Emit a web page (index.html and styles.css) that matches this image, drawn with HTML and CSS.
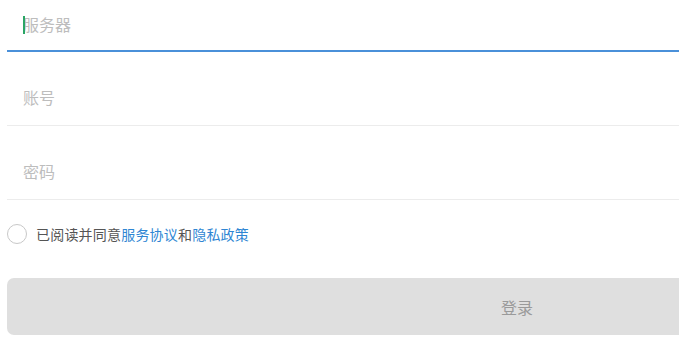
FILE: index.html
```html
<!DOCTYPE html>
<html lang="zh-CN">
<head>
<meta charset="UTF-8" />
<meta name="viewport" content="width=device-width, initial-scale=1" />
<title>登录</title>
<link rel="stylesheet" href="styles.css">
</head>
<body>

<div class="login">
  <div class="field field-server active">
    <span class="caret"></span>
    <input type="text" id="server" placeholder="服务器" />
  </div>
  <div class="field">
    <input type="text" id="account" placeholder="账号" />
  </div>
  <div class="field">
    <input type="password" id="password" placeholder="密码" />
  </div>

  <label class="agree">
    <span class="radio"></span>
    <span class="agree-text">已阅读并同意<a href="#">服务协议</a>和<a href="#">隐私政策</a></span>
  </label>

  <button class="login-btn" id="loginBtn">登录</button>
</div>

</body>
</html>
```

FILE: styles.css
```css
body {
  margin: 0;
  background: #fff;
  font-family: "Noto Sans CJK SC", "Noto Sans", sans-serif;
  overflow: hidden;
}
.login {
  width: 1020px;
  margin-left: 7px;
}
.field {
  position: relative;
  padding-top: 17px;
  border-bottom: 1px solid #ececec;
}
.field-server {
  padding-top: 0;
  border-bottom: 2px solid #4a90d9;
}
.field input {
  display: block;
  width: 100%;
  height: 56px;
  box-sizing: border-box;
  padding: 0 0 0 16px;
  border: none;
  outline: none;
  font-family: inherit;
  font-size: 16px;
  color: #333;
  background: transparent;
}
.field-server input {
  height: 48px;
  margin-bottom: 2px;
}
.field input::placeholder {
  color: #bdbdbd;
}
.caret {
  position: absolute;
  left: 16px;
  top: 16px;
  width: 2px;
  height: 18px;
  background: #2aa564;
}
.agree {
  display: flex;
  align-items: center;
  margin-top: 24px;
  height: 20px;
  font-size: 14px;
  letter-spacing: 0.2px;
  color: #555;
}
.radio {
  width: 18px;
  height: 18px;
  border: 1px solid #c8c8c8;
  border-radius: 50%;
  margin-right: 9px;
}
.agree a {
  color: #2f86d3;
  text-decoration: none;
}
.login-btn {
  display: block;
  width: 100%;
  height: 57px;
  margin-top: 34px;
  border: none;
  border-radius: 7px;
  background: #dfdfdf;
  color: #9a9a9a;
  font-family: inherit;
  font-size: 16px;
}
```
